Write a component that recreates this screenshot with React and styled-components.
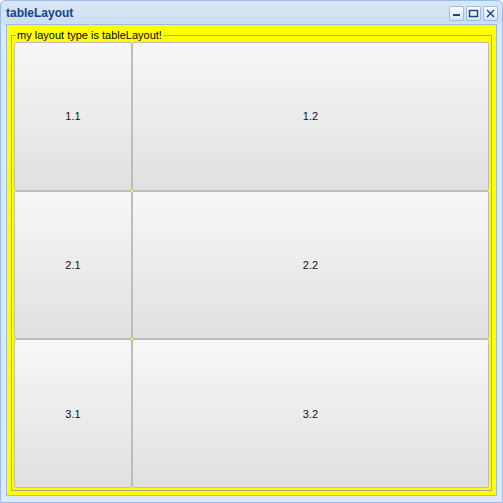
import React from "react";
import styled, { createGlobalStyle } from "styled-components";

const GlobalStyle = createGlobalStyle`
  html, body {
    margin: 0;
    padding: 0;
    background: #ffffff;
  }
  * {
    box-sizing: border-box;
  }
`;

const Window = styled.div`
  width: 503px;
  height: 503px;
  display: flex;
  flex-direction: column;
  border: 1px solid #99bbe8;
  border-radius: 5px 5px 0 0;
  background: linear-gradient(#dae7f6, #cddef3 22px, #dfe8f6 24px);
  font-family: "Liberation Sans", Arial, sans-serif;
`;

const Header = styled.div`
  height: 23px;
  display: flex;
  align-items: center;
  justify-content: space-between;
  padding: 1px 4px 0 5px;
`;

const Title = styled.span`
  font-size: 12px;
  font-weight: bold;
  color: #15428b;
`;

const Tools = styled.div`
  display: flex;
  gap: 2px;
`;

const Tool = styled.div`
  width: 15px;
  height: 15px;
  border: 1px solid #99bbe8;
  border-radius: 2px;
  background: linear-gradient(#ffffff, #d6e3f4);
  display: flex;
  align-items: center;
  justify-content: center;
`;

const Body = styled.div`
  flex: 1;
  margin: 0 5px 6px 5px;
  border: 1px solid #99bbe8;
  background: #ffff00;
  padding: 4px;
  display: flex;
`;

const FieldSet = styled.fieldset`
  flex: 1;
  margin: 0;
  padding: 0 2px 2px 2px;
  border: 1px solid #a8a8a0;
  min-width: 0;
  display: flex;
`;

const Legend = styled.legend`
  font-size: 11px;
  color: #000000;
  padding: 0 1px;
  margin-left: 2px;
  line-height: 13px;
`;

const Grid = styled.div`
  flex: 1;
  display: grid;
  grid-template-columns: 118px 1fr;
  grid-template-rows: repeat(3, 1fr);
`;

const Cell = styled.div`
  display: flex;
  align-items: center;
  justify-content: center;
  border: 1px solid #bdbdbd;
  border-radius: 2px;
  background: linear-gradient(#f7f7f7, #e0e0e0);
  font-size: 11px;
  color: #111111;
`;

const Icon = ({ type }) => (
  <svg width="11" height="11" viewBox="0 0 11 11">
    {type === "min" && <rect x="2" y="6" width="7" height="2" fill="#15428b" />}
    {type === "max" && (
      <rect x="1.5" y="2.5" width="8" height="6" fill="none" stroke="#15428b" strokeWidth="1.4" />
    )}
    {type === "close" && (
      <path d="M2 2 L9 9 M9 2 L2 9" stroke="#15428b" strokeWidth="1.4" />
    )}
  </svg>
);

const cells = ["1.1", "1.2", "2.1", "2.2", "3.1", "3.2"];

export default function App() {
  return (
    <>
      <GlobalStyle />
      <Window>
        <Header>
          <Title>tableLayout</Title>
          <Tools>
            <Tool><Icon type="min" /></Tool>
            <Tool><Icon type="max" /></Tool>
            <Tool><Icon type="close" /></Tool>
          </Tools>
        </Header>
        <Body>
          <FieldSet>
            <Legend>my layout type is tableLayout!</Legend>
            <Grid>
              {cells.map((c) => (
                <Cell key={c}>{c}</Cell>
              ))}
            </Grid>
          </FieldSet>
        </Body>
      </Window>
    </>
  );
}
